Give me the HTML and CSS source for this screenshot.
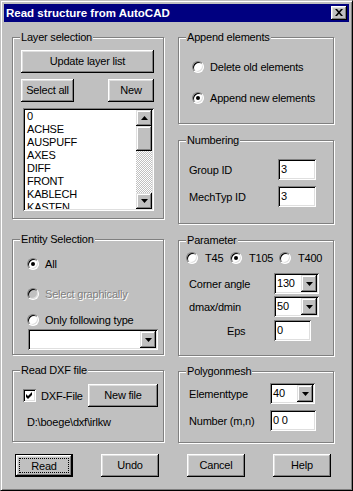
FILE: index.html
```html
<!DOCTYPE html>
<html lang="en">
<head>
  <meta charset="UTF-8" />
  <title>Read structure from AutoCAD</title>
  <link rel="stylesheet" href="styles.css">
</head>
<body>
  <div class="window">
    <div class="titlebar">
      <span class="title">Read structure from AutoCAD</span>
      <span class="close-btn">
        <svg width="8" height="7" viewBox="0 0 8 7"><path d="M0 0h2l2 2.3 2-2.3h2l-3 3.5 3 3.5h-2l-2-2.3-2 2.3h-2l3-3.5z" fill="#000"/></svg>
      </span>
    </div>

    <div class="content">
      <!-- left column -->
      <div class="col">
        <div class="group g-layer">
          <span class="legend">Layer selection</span>
          <div class="btn btn-update">Update layer list</div>
          <div class="btn-row">
            <div class="btn btn-selall">Select all</div>
            <div class="btn btn-new">New</div>
          </div>
          <div class="listbox">
            <div class="list-items">
              <div>0</div>
              <div>ACHSE</div>
              <div>AUSPUFF</div>
              <div>AXES</div>
              <div>DIFF</div>
              <div>FRONT</div>
              <div>KABLECH</div>
              <div>KASTEN</div>
            </div>
            <div class="scrollbar">
              <div class="sb-btn">
                <svg width="7" height="4" viewBox="0 0 7 4"><path d="M3.5 0L7 4H0z" fill="#000"/></svg>
              </div>
              <div class="sb-thumb"></div>
              <div class="sb-track"></div>
              <div class="sb-btn">
                <svg width="7" height="4" viewBox="0 0 7 4"><path d="M0 0h7L3.5 4z" fill="#000"/></svg>
              </div>
            </div>
          </div>
        </div>

        <div class="group g-entity">
          <span class="legend">Entity Selection</span>
          <div class="radio-row r-all"><span class="radio checked"></span><span>All</span></div>
          <div class="radio-row r-graph"><span class="radio disabled"></span><span class="disabled-text">Select graphically</span></div>
          <div class="radio-row r-type"><span class="radio"></span><span>Only following type</span></div>
          <div class="combo combo-type">
            <span class="combo-text"></span>
            <span class="combo-btn"><svg width="7" height="4" viewBox="0 0 7 4"><path d="M0 0h7L3.5 4z" fill="#000"/></svg></span>
          </div>
        </div>

        <div class="group g-dxf">
          <span class="legend">Read DXF file</span>
          <div class="dxf-row">
            <span class="checkbox">
              <svg width="7" height="7" viewBox="0 0 7 7"><path d="M0 2L2 4L6 0V3L2 7L0 5Z" fill="#000"/></svg>
            </span>
            <span class="dxf-label">DXF-File</span>
            <div class="btn btn-newfile">New file</div>
          </div>
          <div class="path-row">D:\boege\dxf\irlkw</div>
        </div>
      </div>

      <!-- right column -->
      <div class="col">
        <div class="group g-append">
          <span class="legend">Append elements</span>
          <div class="radio-row a-del"><span class="radio"></span><span>Delete old elements</span></div>
          <div class="radio-row a-app"><span class="radio checked"></span><span>Append new elements</span></div>
        </div>

        <div class="group g-numbering">
          <span class="legend">Numbering</span>
          <div class="field-row n-group"><span class="field-label w89">Group ID</span><span class="field w38">3</span></div>
          <div class="field-row n-mech"><span class="field-label w89">MechTyp ID</span><span class="field w38">3</span></div>
        </div>

        <div class="group g-param">
          <span class="legend">Parameter</span>
          <div class="type-row">
            <span class="type-item t45"><span class="radio"></span><span>T45</span></span>
            <span class="type-item t105"><span class="radio checked"></span><span>T105</span></span>
            <span class="type-item t400"><span class="radio"></span><span>T400</span></span>
          </div>
          <div class="field-row p-corner">
            <span class="field-label w85">Corner angle</span>
            <div class="combo w45">
              <span class="combo-text">130</span>
              <span class="combo-btn"><svg width="7" height="4" viewBox="0 0 7 4"><path d="M0 0h7L3.5 4z" fill="#000"/></svg></span>
            </div>
          </div>
          <div class="field-row p-dmax">
            <span class="field-label w85">dmax/dmin</span>
            <div class="combo w45">
              <span class="combo-text">50</span>
              <span class="combo-btn"><svg width="7" height="4" viewBox="0 0 7 4"><path d="M0 0h7L3.5 4z" fill="#000"/></svg></span>
            </div>
          </div>
          <div class="field-row p-eps">
            <span class="field-label w85 eps-label">Eps</span>
            <span class="field w37">0</span>
          </div>
        </div>

        <div class="group g-poly">
          <span class="legend">Polygonmesh</span>
          <div class="field-row m-type">
            <span class="field-label w81">Elementtype</span>
            <div class="combo w45">
              <span class="combo-text">40</span>
              <span class="combo-btn"><svg width="7" height="4" viewBox="0 0 7 4"><path d="M0 0h7L3.5 4z" fill="#000"/></svg></span>
            </div>
          </div>
          <div class="field-row m-num">
            <span class="field-label w81">Number (m,n)</span>
            <span class="field w46">0 0</span>
          </div>
        </div>
      </div>
    </div>

    <div class="footer-buttons">
      <div class="btn btn-foot btn-default"><span class="focus">Read</span></div>
      <div class="btn btn-foot">Undo</div>
      <div class="btn btn-foot">Cancel</div>
      <div class="btn btn-foot">Help</div>
    </div>
  </div>
</body>
</html>
```

FILE: styles.css
```css
html, body {
  margin: 0;
  padding: 0;
  background: #c0c0c0;
}

body {
  font-family: 'Liberation Sans', Arial, sans-serif;
  font-size: 11px;
  letter-spacing: -0.2px;
  color: #000;
  white-space: nowrap;
}

.window {
  width: 353px;
  height: 491px;
  box-sizing: border-box;
  background: #c0c0c0;
  border: 1px solid;
  border-color: #c0c0c0 #000 #000 #c0c0c0;
  box-shadow: inset 1px 1px #fff, inset -1px -1px #808080;
  padding: 3px;
}

/* title bar */
.titlebar {
  height: 18px;
  background: #000080;
  color: #fff;
  display: flex;
  align-items: center;
  padding: 0 2px;
}

.title {
  flex: 1;
  font-weight: bold;
  font-size: 11.5px;
  letter-spacing: 0;
}

.close-btn {
  width: 16px;
  height: 14px;
  box-sizing: border-box;
  background: #c0c0c0;
  box-shadow: inset -1px -1px #000, inset 1px 1px #fff, inset -2px -2px #808080, inset 2px 2px #dfdfdf;
  display: flex;
  align-items: center;
  justify-content: center;
  padding-bottom: 1px;
}

/* columns */
.content {
  display: flex;
  gap: 14px;
  height: 421px;
  padding-left: 8px;
}

.col {
  display: flex;
  flex-direction: column;
}

.col:first-child { width: 152px; }
.col:last-child { width: 156px; }

/* group boxes */
.group {
  box-sizing: border-box;
  border: 1px solid #808080;
  box-shadow: inset 1px 1px #fff, 1px 1px #fff;
  display: flex;
  flex-direction: column;
  padding: 0 8px;
}

.legend {
  align-self: flex-start;
  height: 13px;
  line-height: 13px;
  margin: -7px 0 0 -1px;
  padding: 0 1px;
  background: #c0c0c0;
}

.g-layer { margin-top: 15px; height: 182px; }
.g-entity { margin-top: 20px; height: 116px; }
.g-dxf { margin-top: 15px; height: 72px; }

.g-append { margin-top: 15px; height: 87px; }
.g-numbering { margin-top: 16px; height: 84px; }
.g-param { margin-top: 16px; height: 116px; }
.g-poly { margin-top: 15px; height: 72px; }

/* buttons */
.btn {
  box-sizing: border-box;
  height: 23px;
  background: #c0c0c0;
  box-shadow: inset -1px -1px #000, inset 1px 1px #fff, inset -2px -2px #808080, inset 2px 2px #dfdfdf;
  display: flex;
  align-items: center;
  justify-content: center;
  padding-bottom: 1px;
}

.btn-update {
  margin-top: 6px;
  width: 133px;
}

.btn-row {
  margin-top: 6px;
  width: 133px;
  display: flex;
  justify-content: space-between;
}

.btn-selall { width: 53px; }
.btn-new { width: 46px; }

/* listbox */
.listbox {
  margin: 6px 0 0 2px;
  width: 131px;
  height: 103px;
  box-sizing: border-box;
  padding: 2px;
  background: #fff;
  box-shadow: inset 1px 1px #808080, inset -1px -1px #fff, inset 2px 2px #000, inset -2px -2px #dfdfdf;
  display: flex;
}

.list-items {
  flex: 1;
  overflow: hidden;
  padding-left: 2px;
  line-height: 13px;
}

.scrollbar {
  width: 16px;
  display: flex;
  flex-direction: column;
}

.sb-btn, .sb-thumb, .combo-btn {
  box-sizing: border-box;
  background: #c0c0c0;
  box-shadow: inset -1px -1px #000, inset 1px 1px #dfdfdf, inset -2px -2px #808080, inset 2px 2px #fff;
}

.sb-btn {
  height: 16px;
  display: flex;
  align-items: center;
  justify-content: center;
}

.sb-thumb { height: 25px; }

.sb-track {
  flex: 1;
  background: repeating-conic-gradient(#fff 0 25%, #c0c0c0 0 50%) 0 0 / 2px 2px;
}

/* radios */
.radio-row {
  height: 13px;
  display: flex;
  align-items: center;
  gap: 6px;
}

.radio {
  width: 12px;
  height: 12px;
  box-sizing: border-box;
  border-radius: 50%;
  background: #fff;
  border: 1px solid;
  border-color: #808080 #fff #fff #808080;
  box-shadow: inset 1px 1px #000, inset -1px -1px #dfdfdf;
  display: flex;
  align-items: center;
  justify-content: center;
  flex-shrink: 0;
}

.radio.checked::after {
  content: "";
  width: 4px;
  height: 4px;
  border-radius: 50%;
  background: #000;
}

.radio.disabled { background: #c0c0c0; }

.disabled-text {
  color: #808080;
  text-shadow: 1px 1px #fff;
}

.r-all { margin: 11px 0 0 6px; }
.r-graph { margin: 17px 0 0 6px; }
.r-type { margin: 13px 0 0 6px; }

.a-del { margin: 16px 0 0 5px; }
.a-app { margin: 18px 0 0 5px; }

/* combo boxes and fields */
.combo, .field {
  box-sizing: border-box;
  height: 21px;
  background: #fff;
  box-shadow: inset 1px 1px #808080, inset -1px -1px #fff, inset 2px 2px #000, inset -2px -2px #dfdfdf;
  display: flex;
  align-items: center;
}

.combo { padding: 2px; }
.field { padding: 0 3px 1px; }

.combo-text {
  flex: 1;
  padding: 0 0 1px 1px;
}

.combo-btn {
  width: 16px;
  height: 17px;
  display: flex;
  align-items: center;
  justify-content: center;
}

.combo-type {
  margin: 3px 0 0 7px;
  width: 130px;
}

.field-row {
  display: flex;
  align-items: center;
  margin-left: 2px;
}

.field-label { flex-shrink: 0; }
.w81 { width: 81px; }
.w85 { width: 85px; }
.w89 { width: 89px; }
.w37 { width: 37px; }
.w38 { width: 38px; }
.w45 { width: 45px; }
.w46 { width: 46px; }

.eps-label {
  box-sizing: border-box;
  padding-left: 38px;
}

.n-group { margin-top: 12px; }
.n-mech { margin-top: 6px; }

.type-row {
  display: flex;
  height: 13px;
  margin: 4px 0 0 -1px;
}

.type-item {
  display: flex;
  align-items: center;
  gap: 7px;
}

.t45 { width: 44px; }
.t105 { width: 49px; }

.p-corner { margin-top: 9px; }
.p-dmax { margin-top: 2px; }
.p-eps { margin-top: 3px; }

.m-type { margin-top: 5px; }
.m-num { margin-top: 6px; }

/* DXF */
.dxf-row {
  margin-top: 7px;
  display: flex;
  align-items: center;
}

.checkbox {
  margin-left: 2px;
  width: 13px;
  height: 13px;
  flex-shrink: 0;
  box-sizing: border-box;
  background: #fff;
  box-shadow: inset 1px 1px #808080, inset -1px -1px #fff, inset 2px 2px #000, inset -2px -2px #dfdfdf;
  display: flex;
  align-items: center;
  justify-content: center;
}

.dxf-label {
  margin-left: 5px;
  width: 42px;
  flex-shrink: 0;
}

.btn-newfile {
  margin-left: 5px;
  width: 70px;
  flex-shrink: 0;
}

.path-row {
  margin: 9px 0 0 6px;
  height: 13px;
  line-height: 13px;
}

/* footer buttons */
.footer-buttons {
  display: flex;
  gap: 28px;
  margin-top: 11px;
  padding-left: 11px;
}

.btn-foot { width: 58px; }

.btn-default {
  border: 1px solid #000;
  padding: 3px;
  box-shadow: inset -1px -1px #000, inset 1px 1px #fff, inset -2px -2px #808080, inset 2px 2px #dfdfdf;
}

.focus {
  flex: 1;
  align-self: stretch;
  border: 1px dotted #000;
  display: flex;
  align-items: center;
  justify-content: center;
}
```
